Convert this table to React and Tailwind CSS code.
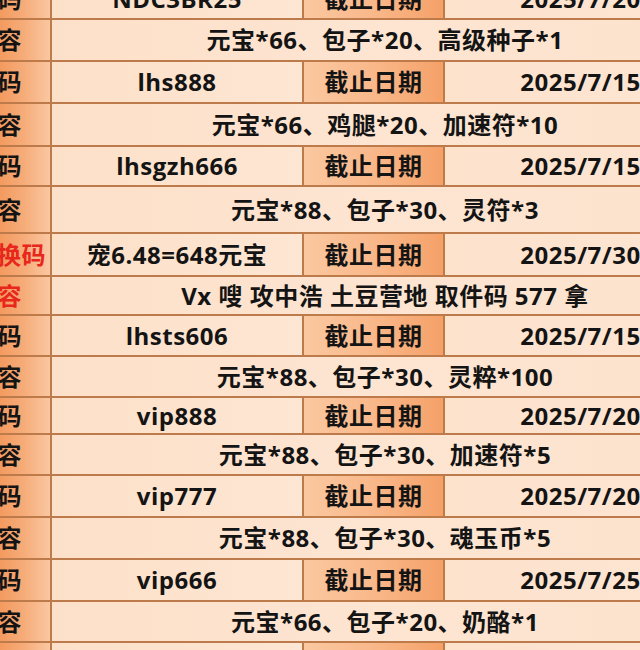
import React from 'react';

// rows of the redeem-code table, cropped the same way as the screenshot
const rows = [
    { type: 'code', h: 41, code: 'NDC3BR25', date: '2025/7/20' },
    { type: 'content', h: 42, text: '元宝*66、包子*20、高级种子*1' },
    { type: 'code', h: 42, code: 'lhs888', date: '2025/7/15' },
    { type: 'content', h: 43, text: '元宝*66、鸡腿*20、加速符*10' },
    { type: 'code', h: 40, code: 'lhsgzh666', date: '2025/7/15' },
    { type: 'content', h: 47, text: '元宝*88、包子*30、灵符*3' },
    { type: 'code', h: 43, code: '宠6.48=648元宝', date: '2025/7/30', red: true },
    { type: 'content', h: 39, text: 'Vx 嗖 攻中浩 土豆营地 取件码 577 拿', red: true },
    { type: 'code', h: 41, code: 'lhsts606', date: '2025/7/15' },
    { type: 'content', h: 41, text: '元宝*88、包子*30、灵粹*100' },
    { type: 'code', h: 37, code: 'vip888', date: '2025/7/20' },
    { type: 'content', h: 41, text: '元宝*88、包子*30、加速符*5' },
    { type: 'code', h: 42, code: 'vip777', date: '2025/7/20' },
    { type: 'content', h: 42, text: '元宝*88、包子*30、魂玉币*5' },
    { type: 'code', h: 42, code: 'vip666', date: '2025/7/25' },
    { type: 'content', h: 41, text: '元宝*66、包子*20、奶酪*1' },
    { type: 'code', h: 41, code: '', date: '' },
];

const Label = ({ row }) => {
    const isCode = row.type === 'code';
    return (
        <div
            className={
                'w-[50px] shrink-0 overflow-hidden flex items-center justify-end whitespace-nowrap bg-gradient-to-r from-[#f39a5f] via-[#f6ad7a] to-[#fac7a2] ' +
                (row.red ? 'text-[#e8261c] ' : 'text-[#141414] ') +
                (isCode && row.red ? 'pr-[4px]' : 'pr-[28px]')
            }
        >
            {isCode ? '兑换码' : '内容'}
        </div>
    );
};

const Row = ({ row }) => (
    <div className="flex border-b-2 border-[#bd7a4a]" style={{ height: row.h }}>
        <Label row={row} />
        {row.type === 'code' ? (
            <>
                <div className="w-[252px] shrink-0 flex items-center justify-center border-l-2 border-[#bd7a4a] bg-gradient-to-r from-[#fde0c8] to-[#fde6d3] whitespace-nowrap">
                    {row.code}
                </div>
                <div className="w-[141px] shrink-0 flex items-center justify-center border-l-2 border-[#bd7a4a] bg-gradient-to-r from-[#fbc8a0] via-[#f9b88a] to-[#f5a168] whitespace-nowrap">
                    截止日期
                </div>
                <div className="w-[273px] shrink-0 flex items-center justify-center border-l-2 border-[#bd7a4a] bg-gradient-to-r from-[#fde2cc] to-[#fde6d4] whitespace-nowrap">
                    {row.date}
                </div>
            </>
        ) : (
            <div className="w-[668px] shrink-0 flex items-center justify-center border-l-2 border-[#bd7a4a] bg-gradient-to-r from-[#fde0c9] via-[#fde5d2] to-[#fde3cd] whitespace-nowrap">
                {row.text}
            </div>
        )}
    </div>
);

export default function App() {
    return (
        <div
            className="w-[640px] h-[650px] overflow-hidden bg-[#fde3cd] text-[24px] tracking-[0.5px] font-bold text-[#141414]"
            style={{ fontFamily: '"Open Sans", "Noto Sans CJK SC", sans-serif' }}
        >
            <div className="-mt-[21px] w-[720px]">
                {rows.map((row, i) => (
                    <Row key={i} row={row} />
                ))}
            </div>
        </div>
    );
}
